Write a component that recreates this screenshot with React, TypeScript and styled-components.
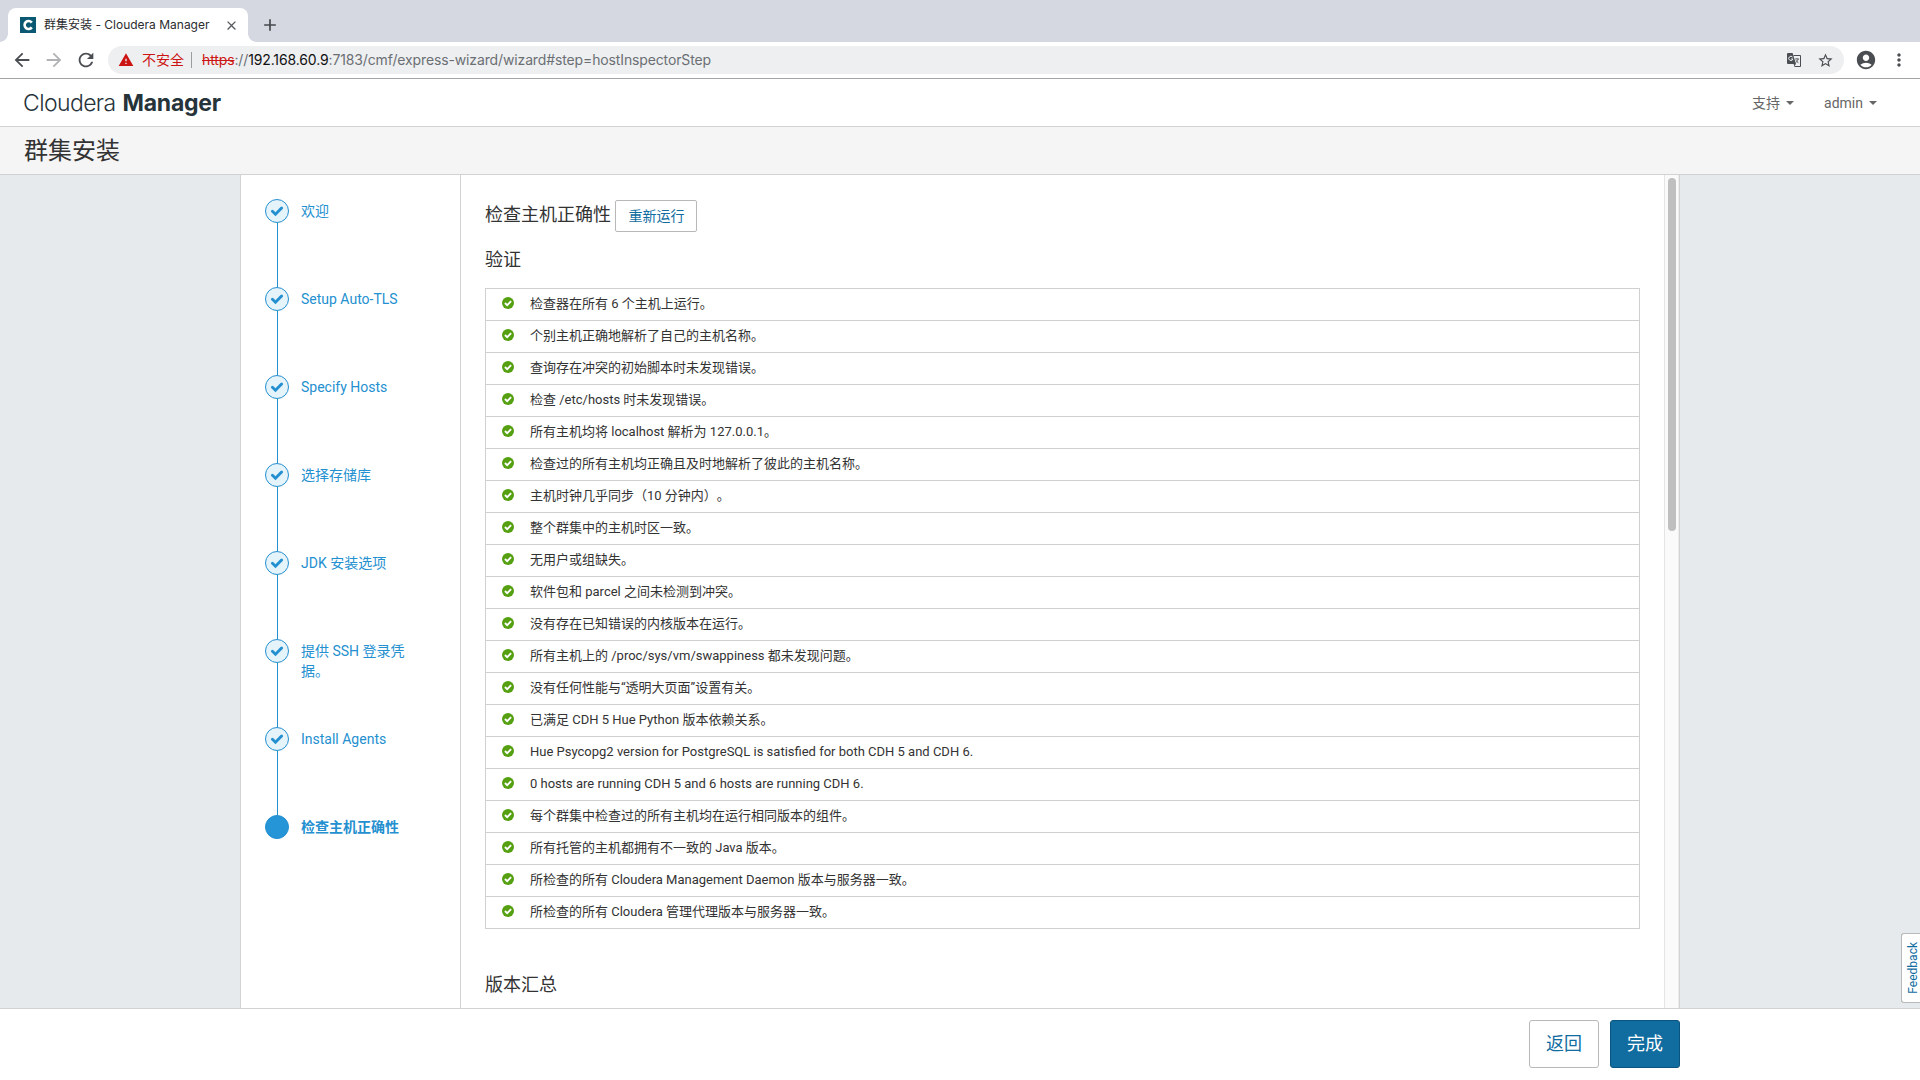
import React from "react";
import styled, { createGlobalStyle } from "styled-components";
import {
  MdArrowBack,
  MdArrowForward,
  MdRefresh,
  MdWarning,
  MdStarBorder,
  MdAccountCircle,
  MdMoreVert,
  MdClose,
  MdAdd,
} from "react-icons/md";

const Global = createGlobalStyle`
  *, *::before, *::after { box-sizing: border-box; }
  html, body { margin: 0; padding: 0; overflow: hidden; }
  body {
    font-family: Roboto, "Noto Sans CJK SC", sans-serif;
    color: #333;
    text-spacing-trim: space-all;
  }
  svg { display: block; flex: none; }
`;

const Page = styled.div`
  display: flex;
  flex-direction: column;
  width: 1920px;
  height: 1080px;
  background: #fff;
`;

const TabStrip = styled.div`
  display: flex;
  align-items: flex-end;
  height: 42px;
  padding-left: 8px;
  background: #d5d8e1;
  font-family: Inter, "Noto Sans CJK SC", sans-serif;
`;

const Tab = styled.div`
  position: relative;
  display: flex;
  align-items: center;
  width: 240px;
  height: 34px;
  padding: 0 9px 0 12px;
  border-radius: 8px 8px 0 0;
  background: #fff;
  &::before,
  &::after {
    content: "";
    position: absolute;
    bottom: 0;
    width: 8px;
    height: 8px;
  }
  &::before {
    left: -8px;
    background: radial-gradient(circle at 0 0, transparent 7.5px, #fff 8px);
  }
  &::after {
    right: -8px;
    background: radial-gradient(circle at 100% 0, transparent 7.5px, #fff 8px);
  }
`;

const Favicon = styled.div`
  display: flex;
  align-items: center;
  justify-content: center;
  width: 16px;
  height: 16px;
  background: #0b5872;
`;

const TabTitle = styled.span`
  flex: 1;
  margin-left: 8px;
  font-size: 12px;
  line-height: 16px;
  color: #2b2c2f;
  white-space: nowrap;
`;

const NewTab = styled.div`
  display: flex;
  align-items: center;
  height: 34px;
  margin-left: 12px;
  color: #45484c;
`;

const Toolbar = styled.div`
  display: flex;
  align-items: center;
  height: 37px;
  border-bottom: 1px solid #a3a4a6;
  padding: 0 11px 0 11px;
  color: #4a4d51;
`;

const NavIcon = styled.span<{ $dim?: boolean }>`
  display: flex;
  width: 32px;
  color: ${(p) => (p.$dim ? "#b0b2b5" : "#4a4d51")};
`;

const Omnibox = styled.div`
  display: flex;
  align-items: center;
  width: 1736px;
  height: 28px;
  margin-left: 1px;
  padding: 0 10px;
  border-radius: 14px;
  background: #eeeff1;
  font: 14px/20px Inter, "Noto Sans CJK SC", sans-serif;
`;

const Insecure = styled.span`
  margin-left: 8px;
  padding-right: 7px;
  color: #cc1512;
`;

const Divider = styled.span`
  width: 1px;
  height: 16px;
  margin-right: 10px;
  background: #9a9c9f;
`;

const Url = styled.span`
  flex: 1;
  color: #6b6f74;
  white-space: nowrap;
  letter-spacing: -0.13px;
  s { color: #cc1512; }
  b { font-weight: 400; color: #111; }
`;

const BoxIcons = styled.span`
  display: flex;
  align-items: center;
  gap: 16px;
  color: #4a4d51;
`;

const Profile = styled.span`
  margin-left: 11px;
`;

const Menu = styled.span`
  margin-left: 12px;
`;

const AppHeader = styled.header`
  display: flex;
  align-items: center;
  justify-content: space-between;
  height: 48px;
  padding: 0 43px 0 23px;
  border-bottom: 1px solid #d2d2d2;
`;

const Logo = styled.div`
  display: flex;
  gap: 7px;
  font: 300 23px/30px Inter, sans-serif;
  color: #26333a;
`;

const LogoLight = styled.span`
  letter-spacing: -0.6px;
`;

const LogoBold = styled.span`
  font-weight: 650;
  letter-spacing: -0.25px;
`;

const HeaderMenus = styled.nav`
  display: flex;
  gap: 30px;
  font-size: 14px;
  line-height: 20px;
  color: #666;
`;

const MenuLink = styled.span`
  display: flex;
  align-items: center;
  gap: 6px;
  &::after {
    content: "";
    border: 4px solid transparent;
    border-top-color: #666;
    border-bottom: 0;
    margin-top: 1px;
  }
`;

const TitleBar = styled.div`
  height: 48px;
  padding: 1px 0 0 24px;
  border-bottom: 1px solid #d2d2d2;
  background: #f5f5f5;
  font-size: 24px;
  line-height: 47px;
  color: #333;
`;

const Main = styled.main`
  display: flex;
  justify-content: center;
  height: 833px;
  background: #e6eaed;
  overflow: hidden;
`;

const Wizard = styled.div`
  display: flex;
  width: 1440px;
  border: solid #d2d2d2;
  border-width: 0 1px;
  background: #fff;
`;

const Steps = styled.ol`
  width: 220px;
  margin: 0;
  padding: 24px 0 0 24px;
  border-right: 1px solid #d2d2d2;
  list-style: none;
`;

const Step = styled.li`
  display: flex;
  height: 88px;
  color: #2490d0;
`;

const Rail = styled.div`
  display: flex;
  flex-direction: column;
  align-items: center;
  width: 24px;
`;

const Node = styled.span<{ $current: boolean }>`
  display: flex;
  flex: none;
  align-items: center;
  justify-content: center;
  width: 24px;
  height: 24px;
  border: 1px solid #2490d0;
  border-radius: 50%;
  background: ${(p) => (p.$current ? "#2595d8" : "#e5f3fa")};
`;

const Line = styled.span`
  flex: 1;
  width: 1px;
  margin-left: 1px;
  background: #2490d0;
`;

const StepLabel = styled.span<{ $current: boolean }>`
  width: 112px;
  margin: 2px 0 0 12px;
  font-size: 14px;
  line-height: 20px;
  font-weight: ${(p) => (p.$current ? 700 : 400)};
`;

const Content = styled.section`
  flex: 1;
  padding: 25px 24px 0;
`;

const HeadRow = styled.div`
  display: flex;
  align-items: center;
  height: 32px;
`;

const Heading = styled.h3<{ $top?: number }>`
  margin: ${(p) => p.$top ?? 0}px 0 0;
  font-size: 18px;
  font-weight: 400;
  line-height: 24px;
  color: #333;
  ${HeadRow} & { padding-bottom: 2px; }
`;

const Button = styled.button<{ $large?: boolean; $primary?: boolean }>`
  display: flex;
  align-items: center;
  justify-content: center;
  width: ${(p) => (p.$large ? 70 : 82)}px;
  height: ${(p) => (p.$large ? 48 : 32)}px;
  padding: 0;
  border: 1px solid ${(p) => (p.$primary ? "#0c5480" : "#b8b8b8")};
  border-radius: ${(p) => (p.$large ? 3 : 2)}px;
  background: ${(p) => (p.$primary ? "#116c9f" : "#fff")};
  color: ${(p) => (p.$primary ? "#fff" : "#116c9f")};
  font-family: inherit;
  font-size: ${(p) => (p.$large ? 18 : 14)}px;
  line-height: 20px;
`;

const Table = styled.ul`
  margin: 16px 0 0;
  padding: 0;
  border: 1px solid #d0d0d0;
  border-bottom: 0;
  list-style: none;
`;

const Row = styled.li`
  display: flex;
  align-items: center;
  height: 32px;
  padding: 0 0 2px 16px;
  border-bottom: 1px solid #d0d0d0;
  font-size: 13px;
  line-height: 20px;
  color: #333;
  svg { color: #55a012; margin: 0 16px 1px 0; }
`;

const Track = styled.div`
  width: 15px;
  padding: 3px 2px 0 3px;
  border-left: 1px solid #e4e4e4;
  border-right: 1px solid #ececec;
  background: #fafafa;
`;

const Thumb = styled.div`
  width: 8px;
  height: 353px;
  border-radius: 4px;
  background: #bfbfbf;
`;

const Footer = styled.footer`
  display: flex;
  justify-content: flex-end;
  gap: 11px;
  height: 72px;
  padding: 11px 240px 0 0;
  border-top: 1px solid #d2d2d2;
  background: #fff;
`;

const Feedback = styled.div`
  position: fixed;
  right: 0;
  top: 933px;
  display: flex;
  align-items: center;
  justify-content: center;
  width: 19px;
  height: 70px;
  padding-left: 4px;
  border: 1px solid #b8b8b8;
  border-right: 0;
  border-radius: 3px 0 0 3px;
  background: #fff;
  color: #116c9f;
  font-size: 12px;
  line-height: 14px;
  span {
    writing-mode: vertical-rl;
    transform: rotate(180deg);
  }
`;

const steps = [
  "欢迎",
  "Setup Auto-TLS",
  "Specify Hosts",
  "选择存储库",
  "JDK 安装选项",
  "提供 SSH 登录凭据。",
  "Install Agents",
  "检查主机正确性",
];

const checks = [
  "检查器在所有 6 个主机上运行。",
  "个别主机正确地解析了自己的主机名称。",
  "查询存在冲突的初始脚本时未发现错误。",
  "检查 /etc/hosts 时未发现错误。",
  "所有主机均将 localhost 解析为 127.0.0.1。",
  "检查过的所有主机均正确且及时地解析了彼此的主机名称。",
  "主机时钟几乎同步（10 分钟内）。",
  "整个群集中的主机时区一致。",
  "无用户或组缺失。",
  "软件包和 parcel 之间未检测到冲突。",
  "没有存在已知错误的内核版本在运行。",
  "所有主机上的 /proc/sys/vm/swappiness 都未发现问题。",
  "没有任何性能与“透明大页面”设置有关。",
  "已满足 CDH 5 Hue Python 版本依赖关系。",
  "Hue Psycopg2 version for PostgreSQL is satisfied for both CDH 5 and CDH 6.",
  "0 hosts are running CDH 5 and 6 hosts are running CDH 6.",
  "每个群集中检查过的所有主机均在运行相同版本的组件。",
  "所有托管的主机都拥有不一致的 Java 版本。",
  "所检查的所有 Cloudera Management Daemon 版本与服务器一致。",
  "所检查的所有 Cloudera 管理代理版本与服务器一致。",
];

function StepCheck() {
  return (
    <svg width="14" height="12" viewBox="0 0 14 12">
      <path
        d="M2.4 6.2 5.5 9.3 11.6 3"
        fill="none"
        stroke="#2490d0"
        strokeWidth="2.9"
        strokeLinecap="round"
      />
    </svg>
  );
}

function CircleCheck() {
  return (
    <svg width="12" height="12" viewBox="0 0 12 12">
      <circle cx="6" cy="6" r="6" fill="currentColor" />
      <path d="M2.9 6 5.2 8.2 9.1 4.2" fill="none" stroke="#fff" strokeWidth="1.9" />
    </svg>
  );
}

function TranslateIcon() {
  return (
    <svg width="14" height="14" viewBox="0 0 14 14">
      <path d="M6.5 2.5h7v11h-6" fill="none" stroke="#4a4d51" />
      <path d="M0 1a1 1 0 0 1 1-1h4.6L9 11H1a1 1 0 0 1-1-1z" fill="#4a4d51" />
      <path d="M5.6 4.2A2.1 2.1 0 1 0 5.9 6H4" fill="none" stroke="#eeeff1" strokeWidth="1" />
      <path d="M8 6h4M10 5v1M11.2 6c-.4 1.8-1.4 3-2.6 3.8M9 7.2l2.4 3" fill="none" stroke="#4a4d51" strokeWidth=".8" />
      <path d="M6.6 11 8.8 11 7.4 13.4z" fill="#4a4d51" />
    </svg>
  );
}

function Browser() {
  return (
    <>
      <TabStrip>
        <Tab>
          <Favicon>
            <svg width="12" height="12" viewBox="0 0 12 12">
              <path d="M9.8 3.6A4 4 0 1 0 9.8 8.4" fill="none" stroke="#fff" strokeWidth="2.6" />
            </svg>
          </Favicon>
          <TabTitle>群集安装 - Cloudera Manager</TabTitle>
          <MdClose size={15} color="#55585c" />
        </Tab>
        <NewTab>
          <MdAdd size={20} />
        </NewTab>
      </TabStrip>
      <Toolbar>
        <NavIcon><MdArrowBack size={22} /></NavIcon>
        <NavIcon $dim><MdArrowForward size={22} /></NavIcon>
        <NavIcon><MdRefresh size={22} /></NavIcon>
        <Omnibox>
          <MdWarning size={16} color="#cc1512" />
          <Insecure>不安全</Insecure>
          <Divider />
          <Url>
            <s>https</s>://<b>192.168.60.9</b>:7183/cmf/express-wizard/wizard#step=hostInspectorStep
          </Url>
          <BoxIcons>
            <TranslateIcon />
            <MdStarBorder size={17} />
          </BoxIcons>
        </Omnibox>
        <Profile><MdAccountCircle size={22} /></Profile>
        <Menu><MdMoreVert size={20} /></Menu>
      </Toolbar>
    </>
  );
}

export default function App() {
  const last = steps.length - 1;
  return (
    <Page>
      <Global />
      <Browser />
      <AppHeader>
        <Logo>
          <LogoLight>Cloudera</LogoLight>
          <LogoBold>Manager</LogoBold>
        </Logo>
        <HeaderMenus>
          <MenuLink>支持</MenuLink>
          <MenuLink>admin</MenuLink>
        </HeaderMenus>
      </AppHeader>
      <TitleBar>群集安装</TitleBar>
      <Main>
        <Wizard>
          <Steps>
            {steps.map((label, i) => (
              <Step key={label}>
                <Rail>
                  <Node $current={i === last}>{i < last && <StepCheck />}</Node>
                  {i < last && <Line />}
                </Rail>
                <StepLabel $current={i === last}>{label}</StepLabel>
              </Step>
            ))}
          </Steps>
          <Content>
            <HeadRow>
              <Heading>检查主机正确性&nbsp;</Heading>
              <Button>重新运行</Button>
            </HeadRow>
            <Heading $top={16}>验证</Heading>
            <Table>
              {checks.map((text) => (
                <Row key={text}>
                  <CircleCheck />
                  {text}
                </Row>
              ))}
            </Table>
            <Heading $top={44}>版本汇总</Heading>
          </Content>
          <Track>
            <Thumb />
          </Track>
        </Wizard>
      </Main>
      <Footer>
        <Button $large>返回</Button>
        <Button $large $primary>完成</Button>
      </Footer>
      <Feedback><span>Feedback</span></Feedback>
    </Page>
  );
}
